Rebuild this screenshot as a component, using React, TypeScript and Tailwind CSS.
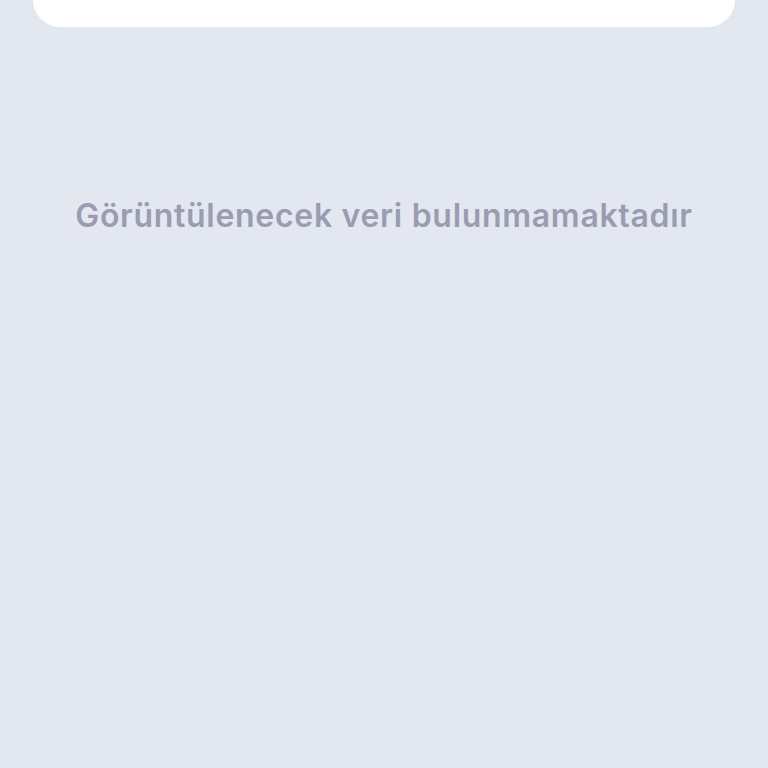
export default function App() {
  return (
    <div className="min-h-[768px] w-full bg-[#e3e8f0] font-['Inter',sans-serif]">
      <div className="mx-[33px] h-[27px] rounded-b-[30px] bg-white" />
      <div className="flex justify-center pt-[165px]">
        <p className="text-[32px] font-semibold tracking-[0.7px] text-[#9a9cb0]">
          Görüntülenecek veri bulunmamaktadır
        </p>
      </div>
    </div>
  );
}
